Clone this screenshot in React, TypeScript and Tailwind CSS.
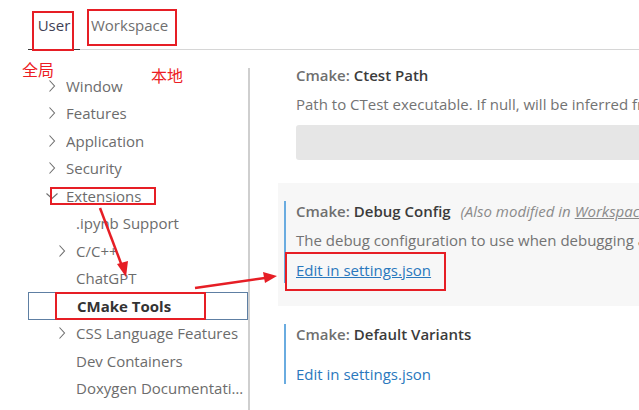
const FONT = { fontFamily: '"Open Sans", "Noto Sans CJK SC", sans-serif' };

type Item = { label: string; level: 0 | 1; chevron?: 'right' | 'down'; selected?: boolean };

const items: Item[] = [
  { label: 'Window', level: 0, chevron: 'right' },
  { label: 'Features', level: 0, chevron: 'right' },
  { label: 'Application', level: 0, chevron: 'right' },
  { label: 'Security', level: 0, chevron: 'right' },
  { label: 'Extensions', level: 0, chevron: 'down' },
  { label: '.ipynb Support', level: 1 },
  { label: 'C/C++', level: 1, chevron: 'right' },
  { label: 'ChatGPT', level: 1 },
  { label: 'CMake Tools', level: 1, selected: true },
  { label: 'CSS Language Features', level: 1, chevron: 'right' },
  { label: 'Dev Containers', level: 1 },
  { label: 'Doxygen Documentation Generator', level: 1 },
];

const Chevron = ({ dir }: { dir: 'right' | 'down' }) => (
  <svg width="16" height="16" viewBox="0 0 16 16" fill="none" stroke="#6f6f6f" strokeWidth="1.1">
    {dir === 'right' ? <path d="M5.5 2.5 L10.5 8 L5.5 13.5" /> : <path d="M2.5 5.5 L8 10.5 L13.5 5.5" />}
  </svg>
);

const TreeRow = ({ item }: { item: Item }) => (
  <div
    className={`h-[27.5px] flex items-center text-[15px] ${
      item.selected ? 'border border-[#5e7fa3] font-bold text-[#333333]' : 'text-[#6c6c6c]'
    } ${item.level === 0 ? 'pl-[16px]' : 'pl-[26px]'}`}
  >
    <span className="w-[16px] h-[16px] flex items-center justify-center shrink-0">
      {item.chevron && <Chevron dir={item.chevron} />}
    </span>
    <span className="ml-[6px] truncate pr-[1px]">{item.label}</span>
  </div>
);

const SettingTitle = ({ name, extra }: { name: string; extra?: boolean }) => (
  <div className="h-5 leading-5 text-[15px] whitespace-nowrap">
    <span className="font-semibold text-[#6f6f6f]">Cmake: </span>
    <span className="font-semibold text-[#3b3b3b]">{name}</span>
    {extra && (
      <span className="ml-[10px] italic text-[#8b8b8b]">
        (Also modified in <span className="underline">Workspace</span>)
      </span>
    )}
  </div>
);

export default function App() {
  return (
    <div className="relative w-[639px] h-[410px] overflow-hidden bg-white" style={FONT}>
      {/* Tabs */}
      <div className="ml-[28px] h-[50px] flex border-b border-[#d6d6d6] text-[15px]">
        <div className="w-[52px] -mb-px border-b border-[#3b3b3b] flex items-center justify-center pt-[1px] text-[#3f3f55]">
          User
        </div>
        <div className="pl-[11px] flex items-center pt-[1px] text-[#6f6f6f]">Workspace</div>
      </div>

      <div className="flex">
        {/* Tree */}
        <div className="ml-[28px] w-[220px] pt-[22px] shrink-0">
          {items.map((it) => (
            <TreeRow key={it.label} item={it} />
          ))}
        </div>
        <div className="w-[2px] mt-[18px] h-[400px] bg-[#cfcfcf] shrink-0" />

        {/* Settings */}
        <div className="flex-1 pl-[28px] min-w-0">
          <div className="pt-[15px] pl-[6px]">
            <div className="border-l-2 border-transparent pl-[10px]">
              <SettingTitle name="Ctest Path" />
              <div className="mt-[9px] h-5 leading-5 text-[15px] text-[#737373] whitespace-nowrap">
                Path to CTest executable. If null, will be inferred from cmake.cmakePath
              </div>
              <div className="mt-[11px] h-[35px] w-[420px] bg-[#e6e6e6] rounded-[3px]" />
            </div>
          </div>

          <div className="mt-[23px] w-[420px] bg-[#f7f7f7] pt-[18px] pb-[23px] pl-[6px]">
            <div className="border-l-2 border-[#6aace0] pl-[10px] pb-[3px]">
              <SettingTitle name="Debug Config" extra />
              <div className="mt-[9px] h-5 leading-5 text-[15px] text-[#737373] whitespace-nowrap">
                The debug configuration to use when debugging a target.
              </div>
              <div className="mt-[10px] h-5 leading-5 text-[15px] text-[#2a78bd] underline whitespace-nowrap">
                Edit in settings.json
              </div>
            </div>
          </div>

          <div className="pt-[18px] pl-[6px]">
            <div className="border-l-2 border-[#6aace0] pl-[10px]">
              <SettingTitle name="Default Variants" />
              <div className="mt-[20px] h-5 leading-5 text-[15px] text-[#2a78bd] whitespace-nowrap">
                Edit in settings.json
              </div>
            </div>
          </div>
        </div>
      </div>

      {/* Annotations */}
      <div className="absolute left-[32px] top-[11px] w-[42px] h-[40px] border-2 border-[#e61e25]" />
      <div className="absolute left-[87px] top-[9px] w-[90px] h-[37px] border-2 border-[#e61e25]" />
      <div className="absolute left-[22px] top-[60px] text-[16px] leading-[20px] text-[#ec1c24]">全局</div>
      <div className="absolute left-[151px] top-[66px] text-[16px] leading-[20px] text-[#ec1c24]">本地</div>
      <div className="absolute left-[50px] top-[187px] w-[106px] h-[18px] border-2 border-[#e61e25]" />
      <div className="absolute left-[55px] top-[292px] w-[151px] h-[28px] border-2 border-[#e61e25]" />
      <div className="absolute left-[285px] top-[252px] w-[161px] h-[39px] border-2 border-[#e61e25]" />

      <svg className="absolute left-0 top-0 pointer-events-none" width="639" height="410">
        <line x1="100" y1="208" x2="122" y2="266" stroke="#e61e25" strokeWidth="2.5" />
        <polygon points="126,277 117,264 128,261" fill="#e61e25" />
        <line x1="195" y1="288" x2="265" y2="278" stroke="#e61e25" strokeWidth="2.5" />
        <polygon points="277,276 263,272 265,283" fill="#e61e25" />
      </svg>
    </div>
  );
}
